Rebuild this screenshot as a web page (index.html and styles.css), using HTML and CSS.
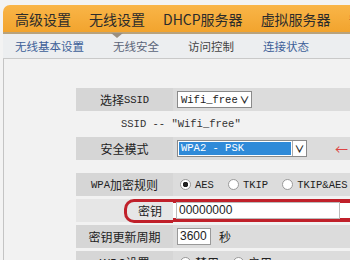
FILE: index.html
```html
<!DOCTYPE html>
<html lang="zh-CN">
<head>
    <meta charset="UTF-8">
    <title>无线安全</title>
    <link rel="stylesheet" href="styles.css">
</head>
<body>
    <div class="page">
        <nav class="topnav">
            <span class="tab">高级设置</span>
            <span class="tab active">无线设置</span>
            <span class="tab">DHCP服务器</span>
            <span class="tab">虚拟服务器</span>
            <span class="tab">安全设置</span>
        </nav>
        <nav class="subnav">
            <span class="sub blue">无线基本设置</span>
            <span class="sub cur">无线安全</span>
            <span class="sub">访问控制</span>
            <span class="sub blue">连接状态</span>
        </nav>
        <main class="content">
            <div class="row band">
                <div class="label">选择<span class="mono">SSID</span></div>
                <div class="value">
                    <span class="select small"><span class="mono">Wifi_free</span><span class="chev">&#8744;</span></span>
                </div>
            </div>
            <div class="row note">
                <span class="mono">SSID -- "Wifi_free"</span>
            </div>
            <div class="row band">
                <div class="label">安全模式</div>
                <div class="value">
                    <span class="select wide"><span class="picked mono">WPA2 - PSK</span><span class="chev">&#8744;</span></span>
                    <span class="arrow">&larr;</span>
                </div>
            </div>
            <div class="spacer"></div>
            <div class="row band">
                <div class="label"><span class="mono">WPA</span>加密规则</div>
                <div class="value radios">
                    <span class="radio on"></span><span class="mono">AES</span>
                    <span class="radio"></span><span class="mono">TKIP</span>
                    <span class="radio"></span><span class="mono">TKIP&amp;AES</span>
                </div>
            </div>
            <div class="row key">
                <div class="label"><span class="circled">密钥</span></div>
                <div class="value boxed">
                    <span class="input long">00000000</span>
                </div>
            </div>
            <div class="row band">
                <div class="label">密钥更新周期</div>
                <div class="value">
                    <span class="input short">3600</span>
                    <span class="unit">秒</span>
                </div>
            </div>
            <div class="row band">
                <div class="label">WDS设置</div>
                <div class="value radios">
                    <span class="radio on"></span><span>禁用</span>
                    <span class="radio"></span><span>启用</span>
                </div>
            </div>
        </main>
    </div>
</body>
</html>
```

FILE: styles.css
```css
body {
    margin: 0;
    background: #f3f3f3;
    font-family: "Noto Sans CJK SC", sans-serif;
    color: #222;
    overflow: hidden;
}

.page {
    width: 350px;
    height: 260px;
    padding-top: 5px;
    box-sizing: border-box;
}

.topnav {
    position: relative;
    display: flex;
    gap: 18px;
    height: 27px;
    margin-left: 3px;
    padding-left: 12px;
    align-items: center;
    white-space: nowrap;
    background: linear-gradient(#f9b548, #f2a42e);
    border-radius: 7px 0 0 0;
    border-bottom: 2px solid #b9a37c;
    font-size: 14px;
    color: #2b2b2b;
}

.tab.active {
    position: relative;
}

.tab.active::after {
    content: "";
    position: absolute;
    left: 22px;
    bottom: -9px;
    border-left: 6px solid transparent;
    border-right: 6px solid transparent;
    border-top: 5px solid #9a8f80;
}

.subnav {
    display: flex;
    gap: 29px;
    height: 24px;
    margin-left: 3px;
    padding-left: 12px;
    align-items: center;
    background: #eceef0;
    border-bottom: 1px solid #c9c9c9;
    font-size: 11.5px;
    color: #444;
}

.sub.blue {
    color: #3d5f98;
}

.sub.cur {
    color: #5a6478;
}

.content {
    height: 200px;
    margin-left: 3px;
    padding: 29px 0 0 72px;
    border-left: 1px solid #c4c4c4;
    background: #f2f2f2;
}

.mono {
    font-family: "Liberation Mono", "Noto Sans CJK SC", monospace;
    font-size: 10.5px;
}

.row {
    display: flex;
    height: 23px;
    margin-bottom: 3px;
    font-size: 12px;
}

.row.band {
    background: #dcdcdc;
}

.label {
    width: 97px;
    display: flex;
    align-items: center;
    justify-content: center;
    background: #d6d6d6;
}

.value {
    flex: 1;
    display: flex;
    align-items: center;
    padding-left: 4px;
}

.row.note {
    height: 20px;
    align-items: center;
    padding-left: 45px;
    color: #333;
}

.select {
    display: flex;
    align-items: center;
    height: 15px;
    border: 1px solid #8a8a8a;
    background: #fff;
}

.select.small {
    width: 70px;
    padding-left: 3px;
    justify-content: space-between;
}

.select.wide {
    width: 128px;
}

.picked {
    flex: 1;
    height: 13px;
    margin: 1px;
    padding-left: 2px;
    line-height: 13px;
    background: #2f8ad8;
    color: #fff;
}

.chev {
    width: 13px;
    font-size: 10px;
    font-weight: bold;
    text-align: center;
    border-left: 1px solid #aaa;
}

.select.small .chev {
    border-left: none;
}

.arrow {
    margin-left: 28px;
    color: #d44;
    font-size: 13px;
}

.spacer {
    height: 10px;
}

.radios {
    gap: 4px;
}

.radio {
    width: 11px;
    height: 11px;
    border: 1px solid #999;
    border-radius: 50%;
    background: #fff;
    box-sizing: border-box;
    margin-left: 10px;
}

.radio:first-child {
    margin-left: 3px;
}

.radio.on {
    background: radial-gradient(circle, #222 0 2.5px, #fff 3px);
}

.row.key {
    background: #ececec;
}

.row.key .label {
    background: #e6e6e6;
    justify-content: flex-end;
}

.circled {
    display: inline-block;
    width: 46px;
    height: 18px;
    line-height: 18px;
    text-align: center;
    border: 3px solid #c0202a;
    border-right: none;
    border-radius: 10px 0 0 10px;
}

.value.boxed {
    border-top: 4px solid #c0202a;
    border-bottom: 4px solid #c0202a;
    background: #fff;
    padding-left: 3px;
}

.input {
    display: inline-block;
    height: 15px;
    line-height: 15px;
    padding-left: 2px;
    border: 1px solid #999;
    background: #fff;
    font-family: "Liberation Sans", sans-serif;
    font-size: 12px;
}

.input.long {
    width: 160px;
    border-color: #bbb;
}

.input.short {
    width: 30px;
}

.unit {
    margin-left: 8px;
}
```
